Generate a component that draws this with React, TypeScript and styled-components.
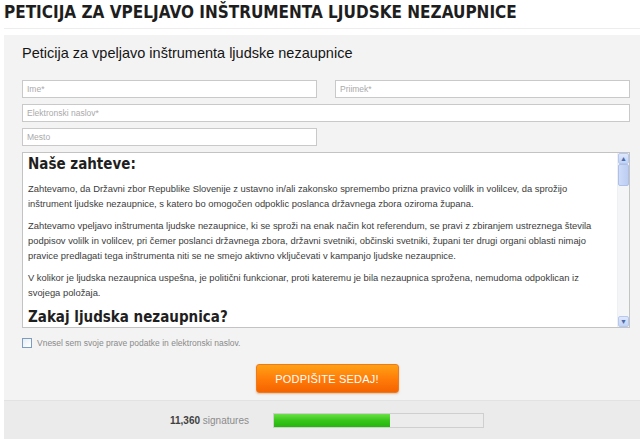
import styled, { createGlobalStyle } from 'styled-components'

const GlobalStyle = createGlobalStyle`
  html, body {
    margin: 0;
    padding: 0;
    background: #ffffff;
    font-family: "Liberation Sans", Arial, sans-serif;
  }
`

const Page = styled.div`
  width: 640px;
  height: 439px;
  overflow: hidden;
  padding-left: 4px;
  box-sizing: border-box;
  display: flex;
  flex-direction: column;
`

const PageTitle = styled.h1`
  margin: 0;
  padding-top: 2px;
  height: 29px;
  font-family: "DejaVu Sans Condensed", "DejaVu Sans", sans-serif;
  font-weight: bold;
  font-size: 17px;
  line-height: 20px;
  color: #1e1e1e;
  border-bottom: 1px solid #ededed;
  box-sizing: border-box;
  white-space: nowrap;
`

const Panel = styled.div`
  flex: 1;
  margin-top: 6px;
  background: #f3f3f3;
  display: flex;
  flex-direction: column;
`

const PanelBody = styled.div`
  flex: 1;
  padding: 9px 10px 0 18px;
  display: flex;
  flex-direction: column;
`

const PanelHeading = styled.h2`
  margin: 0 0 18px;
  font-size: 14.5px;
  font-weight: normal;
  color: #151515;
  line-height: 18px;
`

const FieldRow = styled.div`
  display: flex;
  gap: 18px;
  margin-bottom: 6px;
`

const Field = styled.div<{ $wide?: boolean }>`
  width: ${p => (p.$wide ? '608px' : '295px')};
  height: 18px;
  background: #ffffff;
  border: 1px solid #c9c9c9;
  box-sizing: border-box;
  font-size: 8.5px;
  color: #aaaaaa;
  padding: 3px 4px 0;
`

const TextBox = styled.div`
  width: 608px;
  height: 176px;
  background: #ffffff;
  border: 1px solid #c3c3c3;
  box-sizing: border-box;
  display: flex;
`

const TextContent = styled.div`
  flex: 1;
  overflow: hidden;
  padding: 1px 6px 0 5px;
  color: #3c3c3c;
`

const TextHeading = styled.h3`
  margin: 0 0 7px;
  font-family: "DejaVu Sans Condensed", "DejaVu Sans", sans-serif;
  font-size: 15px;
  font-weight: bold;
  color: #1f1f1f;
  line-height: 20px;
`

const Para = styled.p`
  margin: 0 0 7px;
  font-size: 9.4px;
  line-height: 15px;
`

const ScrollTrack = styled.div`
  width: 11px;
  background: #f4f5f7;
  border-left: 1px solid #eef0f3;
  display: flex;
  flex-direction: column;
`

const ScrollButton = styled.div`
  height: 11px;
  background: linear-gradient(#dfe8fb, #c2d3f6);
  border: 1px solid #b7c8ee;
  box-sizing: border-box;
  border-radius: 2px;
  color: #4d6aa8;
  font-size: 7px;
  line-height: 9px;
  text-align: center;
`

const ScrollThumb = styled.div`
  height: 22px;
  background: linear-gradient(90deg, #cfdcf8, #bccdf3);
  border: 1px solid #aebfe8;
  box-sizing: border-box;
  border-radius: 2px;
`

const ScrollSpace = styled.div`
  flex: 1;
`

const CheckRow = styled.label`
  display: flex;
  align-items: center;
  gap: 5px;
  margin-top: 10px;
  font-size: 8.5px;
  color: #8a8a8a;
`

const CheckBox = styled.span`
  width: 8px;
  height: 8px;
  border: 1px solid #7e9cc0;
  background: linear-gradient(135deg, #e8edf3, #ffffff);
`

const SubmitButton = styled.button`
  align-self: center;
  margin: 16px 0 0 2px;
  width: 143px;
  height: 29px;
  border: 1px solid #ee7a1c;
  border-radius: 3px;
  background: linear-gradient(#ffa115, #ff7a08 55%, #f46300);
  box-shadow: 0 1px 2px rgba(180, 90, 20, 0.35);
  color: #ffffff;
  font-family: "Liberation Sans", Arial, sans-serif;
  font-size: 11px;
  letter-spacing: 0.2px;
`

const Footer = styled.div`
  height: 39px;
  flex: none;
  background: #ebebeb;
  border-top: 1px solid #e2e2e2;
  box-sizing: border-box;
  display: flex;
  align-items: center;
  padding-left: 166px;
  gap: 24px;
`

const Count = styled.span`
  font-size: 10px;
  color: #8b8b8b;

  b {
    color: #3f3f3f;
    font-weight: bold;
  }
`

const Progress = styled.div`
  width: 211px;
  height: 15px;
  border: 1px solid #cfcfcf;
  background: #ececec;
  box-sizing: border-box;
  display: flex;
`

const ProgressFill = styled.div`
  background: linear-gradient(#6be046, #38c61a 50%, #24b50c);
`

export default function App() {
  const signed = 11360
  const goal = 20400

  return (
    <>
      <GlobalStyle />
      <Page>
        <PageTitle>PETICIJA ZA VPELJAVO INŠTRUMENTA LJUDSKE NEZAUPNICE</PageTitle>
        <Panel>
          <PanelBody>
            <PanelHeading>Peticija za vpeljavo inštrumenta ljudske nezaupnice</PanelHeading>
            <FieldRow>
              <Field>Ime*</Field>
              <Field>Priimek*</Field>
            </FieldRow>
            <FieldRow>
              <Field $wide>Elektronski naslov*</Field>
            </FieldRow>
            <FieldRow>
              <Field>Mesto</Field>
            </FieldRow>
            <TextBox>
              <TextContent>
                <TextHeading>Naše zahteve:</TextHeading>
                <Para>
                  Zahtevamo, da Državni zbor Republike Slovenije z ustavno in/ali zakonsko spremembo prizna pravico volilk in volilcev, da sprožijo inštrument ljudske nezaupnice, s katero bo omogočen odpoklic poslanca državnega zbora oziroma župana.
                </Para>
                <Para>
                  Zahtevamo vpeljavo inštrumenta ljudske nezaupnice, ki se sproži na enak način kot referendum, se pravi z zbiranjem ustreznega števila podpisov volilk in volilcev, pri čemer poslanci državnega zbora, državni svetniki, občinski svetniki, župani ter drugi organi oblasti nimajo pravice predlagati tega inštrumenta niti se ne smejo aktivno vključevati v kampanjo ljudske nezaupnice.
                </Para>
                <Para>
                  V kolikor je ljudska nezaupnica uspešna, je politični funkcionar, proti kateremu je bila nezaupnica sprožena, nemudoma odpoklican iz svojega položaja.
                </Para>
                <TextHeading>Zakaj ljudska nezaupnica?</TextHeading>
              </TextContent>
              <ScrollTrack>
                <ScrollButton>▲</ScrollButton>
                <ScrollThumb />
                <ScrollSpace />
                <ScrollButton>▼</ScrollButton>
              </ScrollTrack>
            </TextBox>
            <CheckRow>
              <CheckBox />
              Vnesel sem svoje prave podatke in elektronski naslov.
            </CheckRow>
            <SubmitButton>PODPIŠITE SEDAJ!</SubmitButton>
          </PanelBody>
          <Footer>
            <Count>
              <b>11,360</b> signatures
            </Count>
            <Progress>
              <ProgressFill style={{ width: `${(signed / goal) * 100}%` }} />
            </Progress>
          </Footer>
        </Panel>
      </Page>
    </>
  )
}
